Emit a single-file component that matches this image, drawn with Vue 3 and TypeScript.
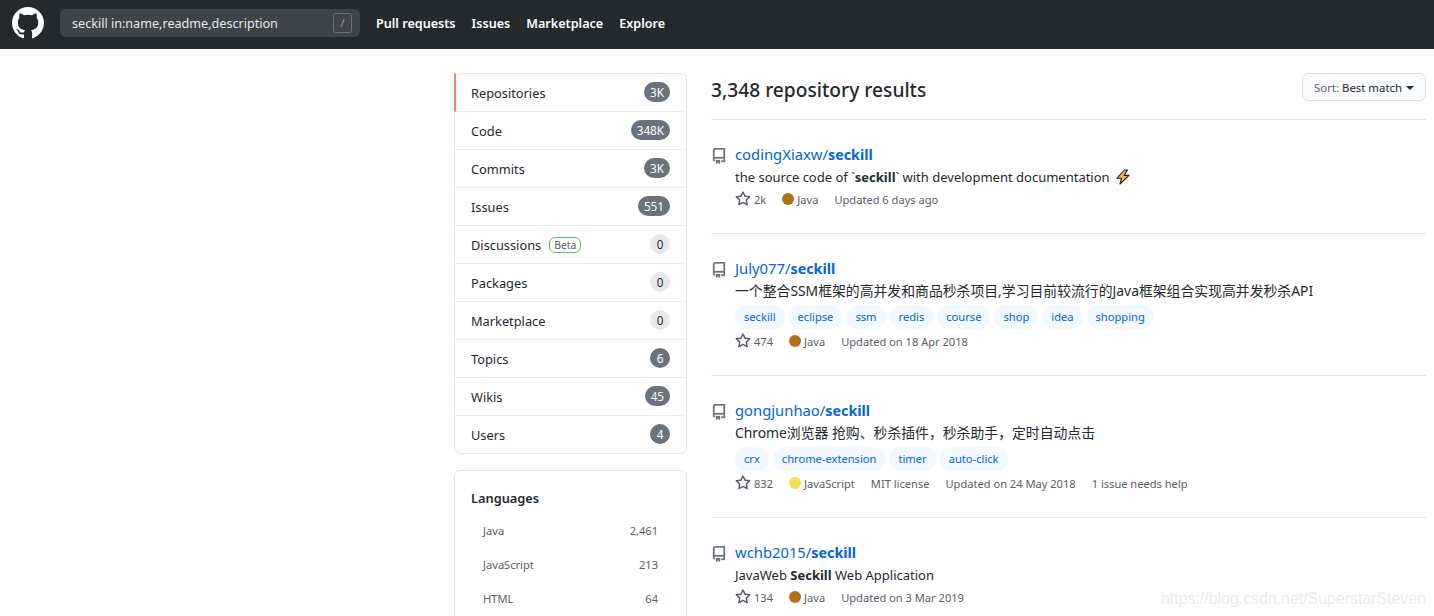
<script setup lang="ts">
interface Row { label: string; count: string; dark: boolean; beta?: boolean }
interface Repo { owner: string; desc: string; tags: string[]; stars: string; lang: string; color: string; meta: string[]; bolt?: boolean; bold?: [string, string, string] }

const rows: Row[] = [
  { label: 'Repositories', count: '3K', dark: true },
  { label: 'Code', count: '348K', dark: true },
  { label: 'Commits', count: '3K', dark: true },
  { label: 'Issues', count: '551', dark: true },
  { label: 'Discussions', count: '0', dark: false, beta: true },
  { label: 'Packages', count: '0', dark: false },
  { label: 'Marketplace', count: '0', dark: false },
  { label: 'Topics', count: '6', dark: true },
  { label: 'Wikis', count: '45', dark: true },
  { label: 'Users', count: '4', dark: true },
]
const langs = [
  { name: 'Java', n: '2,461' },
  { name: 'JavaScript', n: '213' },
  { name: 'HTML', n: '64' },
]
const repos: Repo[] = [
  { owner: 'codingXiaxw', desc: '', bold: ['the source code of `', 'seckill', '` with development documentation '], bolt: true, tags: [], stars: '2k', lang: 'Java', color: '#b07219', meta: ['Updated 6 days ago'] },
  { owner: 'July077', desc: '一个整合SSM框架的高并发和商品秒杀项目,学习目前较流行的Java框架组合实现高并发秒杀API', tags: ['seckill', 'eclipse', 'ssm', 'redis', 'course', 'shop', 'idea', 'shopping'], stars: '474', lang: 'Java', color: '#b07219', meta: ['Updated on 18 Apr 2018'] },
  { owner: 'gongjunhao', desc: 'Chrome浏览器 抢购、秒杀插件，秒杀助手，定时自动点击', tags: ['crx', 'chrome-extension', 'timer', 'auto-click'], stars: '832', lang: 'JavaScript', color: '#f1e05a', meta: ['MIT license', 'Updated on 24 May 2018', '1 issue needs help'] },
  { owner: 'wchb2015', desc: '', bold: ['JavaWeb ', 'Seckill', ' Web Application'], tags: [], stars: '134', lang: 'Java', color: '#b07219', meta: ['Updated on 3 Mar 2019'] },
]
const navLinks = ['Pull requests', 'Issues', 'Marketplace', 'Explore']
</script>

<template>
  <div class="page">
    <header class="top">
      <svg class="mark" viewBox="0 0 16 16" width="32" height="32" aria-hidden="true"><path fill="#fff" d="M8 0C3.58 0 0 3.58 0 8c0 3.54 2.29 6.53 5.47 7.59.4.07.55-.17.55-.38 0-.19-.01-.82-.01-1.49-2.01.37-2.53-.49-2.69-.94-.09-.23-.48-.94-.82-1.13-.28-.15-.68-.52-.01-.53.63-.01 1.08.58 1.23.82.72 1.21 1.87.87 2.33.66.07-.52.28-.87.51-1.07-1.78-.2-3.64-.89-3.64-3.95 0-.87.31-1.59.82-2.15-.08-.2-.36-1.02.08-2.12 0 0 .67-.21 2.2.82.64-.18 1.32-.27 2-.27.68 0 1.36.09 2 .27 1.53-1.04 2.2-.82 2.2-.82.44 1.1.16 1.92.08 2.12.51.56.82 1.27.82 2.15 0 3.07-1.87 3.75-3.65 3.95.29.25.54.73.54 1.48 0 1.07-.01 1.93-.01 2.2 0 .21.15.46.55.38A8.013 8.013 0 0016 8c0-4.42-3.58-8-8-8z"/></svg>
      <div class="search">
        <span class="query">seckill in:name,readme,description</span>
        <span class="slash">/</span>
      </div>
      <nav class="nav"><a v-for="l in navLinks" :key="l">{{ l }}</a></nav>
    </header>

    <div class="body">
      <aside class="side">
        <div class="box">
          <div v-for="(r, i) in rows" :key="r.label" class="row" :class="{ active: i === 0 }">
            <span class="row-label">{{ r.label }}</span>
            <span v-if="r.beta" class="beta">Beta</span>
            <span class="count" :class="{ dark: r.dark }">{{ r.count }}</span>
          </div>
        </div>
        <div class="box lang-box">
          <h3>Languages</h3>
          <div v-for="l in langs" :key="l.name" class="lang-row"><span>{{ l.name }}</span><span>{{ l.n }}</span></div>
        </div>
      </aside>

      <main class="main">
        <div class="head">
          <h2>3,348 repository results</h2>
          <button class="sort"><span class="sort-k">Sort:</span> Best match<i class="caret"></i></button>
        </div>
        <article v-for="r in repos" :key="r.owner" class="repo" :class="{ tagged: r.tags.length }">
          <svg class="repo-icon" viewBox="0 0 16 16" width="16" height="16" aria-hidden="true"><path fill="#6a737d" stroke="#6a737d" stroke-width=".3" fill-rule="evenodd" d="M2 2.5A2.5 2.5 0 014.5 0h8.75a.75.75 0 01.75.75v12.5a.75.75 0 01-.75.75h-2.5a.75.75 0 110-1.5h1.75v-2h-8a1 1 0 00-.714 1.7.75.75 0 01-1.072 1.05A2.495 2.495 0 012 11.5v-9zm10.5-1V9h-8c-.356 0-.694.074-1 .208V2.5a1 1 0 011-1h8zM5 12.25v3.25a.25.25 0 00.4.2l1.45-1.087a.25.25 0 01.3 0L8.6 15.7a.25.25 0 00.4-.2v-3.25a.25.25 0 00-.25-.25h-3.5a.25.25 0 00-.25.25z"/></svg>
          <div class="repo-body">
            <div class="repo-title">{{ r.owner }}/<b>seckill</b></div>
            <p class="desc" :class="{ cjk: !r.bold }">
              <template v-if="r.bold">{{ r.bold[0] }}<b>{{ r.bold[1] }}</b>{{ r.bold[2] }}</template>
              <template v-else>{{ r.desc }}</template>
              <svg v-if="r.bolt" class="bolt" viewBox="0 0 16 16" width="16" height="16" aria-hidden="true"><path fill="#fdbb3c" stroke="#1b1f23" stroke-width="1.1" stroke-linejoin="round" d="M9.5 1 2 9.2h4.6L5 15l9-8.6H9.2L12.5 1z"/></svg>
            </p>
            <div v-if="r.tags.length" class="tags"><span v-for="t in r.tags" :key="t" class="tag">{{ t }}</span></div>
            <div class="meta">
              <span class="stars">
                <svg viewBox="0 0 16 16" width="16" height="16" aria-hidden="true"><path fill="#586069" fill-rule="evenodd" d="M8 .25a.75.75 0 01.673.418l1.882 3.815 4.21.612a.75.75 0 01.416 1.279l-3.046 2.97.719 4.192a.75.75 0 01-1.088.791L8 12.347l-3.766 1.98a.75.75 0 01-1.088-.79l.72-4.194L.818 6.374a.75.75 0 01.416-1.28l4.21-.611L7.327.668A.75.75 0 018 .25zm0 2.445L6.615 5.5a.75.75 0 01-.564.41l-3.097.45 2.24 2.184a.75.75 0 01.216.664l-.528 3.084 2.769-1.456a.75.75 0 01.698 0l2.77 1.456-.53-3.084a.75.75 0 01.216-.664l2.24-2.183-3.096-.45a.75.75 0 01-.564-.41L8 2.694v.001z"/></svg>
                {{ r.stars }}
              </span>
              <span class="lang"><i class="dot" :style="{ background: r.color }"></i>{{ r.lang }}</span>
              <span v-for="m in r.meta" :key="m">{{ m }}</span>
            </div>
          </div>
        </article>
      </main>
    </div>
    <div class="mark-wm">https://blog.csdn.net/SuperstarSteven</div>
  </div>
</template>

<style>
html, body { margin: 0; overflow: hidden; background: #fff; }
</style>

<style scoped>
.page { position: relative; width: 1434px; height: 616px; overflow: hidden; font-family: "Noto Sans", "Noto Sans CJK SC", sans-serif; font-size: 12.8px; color: #24292e; }
.top { height: 49px; background: #24292e; display: flex; align-items: center; padding-left: 12px; box-sizing: border-box; }
.mark { flex: none; margin-top: -3px; }
.search { width: 300px; height: 28px; margin-left: 16px; margin-top: -3px; border-radius: 6px; background: #3f4448; display: flex; align-items: center; justify-content: space-between; padding: 0 8px 0 12px; box-sizing: border-box; color: #e6e8e9; font-size: 12.6px; }
.slash { width: 19px; height: 20px; border: 1px solid #6b7074; border-radius: 3px; box-sizing: border-box; text-align: center; line-height: 18px; font-size: 11px; color: #9a9ea1; }
.nav { display: flex; gap: 16px; margin-left: 16px; margin-top: -3px; color: #fff; font-weight: 600; font-size: 12.6px; }
.body { display: flex; padding: 24px 8px 0 454px; }
.side { width: 233px; flex: none; }
.box { border: 1px solid #e1e4e8; border-radius: 6px; box-sizing: border-box; }
.row { height: 38px; display: flex; align-items: center; padding: 0 16px; border-bottom: 1px solid #eaecef; box-sizing: border-box; position: relative; }
.row:last-child { border-bottom: 0; height: 37px; }
.row.active::before { content: ""; position: absolute; left: -1px; top: -1px; bottom: -1px; width: 2px; background: #f9826c; border-radius: 6px 0 0 6px; }
.beta { margin-left: 8px; height: 16px; line-height: 14px; padding: 0 4px; border: 1px solid #4cc766; border-radius: 6px; font-size: 10.4px; color: #586069; box-sizing: border-box; }
.count { margin-left: auto; margin-top: -1px; min-width: 20px; height: 20px; padding: 0 6px; border-radius: 10px; background: #e6e8eb; color: #24292e; font-size: 11.7px; line-height: 20px; text-align: center; box-sizing: border-box; }
.count.dark { background: #6a737d; color: #fff; }
.lang-box { margin-top: 16px; padding: 16px 16px 0; height: 160px; }
.lang-box h3 { margin: 0 0 5px; font-size: 12.8px; font-weight: 600; line-height: 22px; }
.lang-row { display: flex; justify-content: space-between; height: 34px; line-height: 34px; padding: 0 12px; font-size: 11.1px; color: #586069; box-sizing: border-box; }
.main { margin-left: 24px; width: 715px; }
.head { height: 47px; display: flex; align-items: flex-start; justify-content: space-between; border-bottom: 1px solid #e1e4e8; box-sizing: border-box; }
.head h2 { margin: 3px 0 0; font-size: 19.2px; font-weight: 500; line-height: 28px; }
.sort { height: 28px; width: 124px; padding: 0; border: 1px solid #dcdee1; border-radius: 6px; background: #fafbfc; font: inherit; font-size: 11.4px; color: #24292e; }
.sort-k { color: #586069; }
.caret { display: inline-block; margin-left: 4px; vertical-align: 2px; border: 4px solid transparent; border-top-color: #24292e; border-bottom: 0; }
.repo { display: flex; align-items: flex-start; border-bottom: 1px solid #e1e4e8; box-sizing: border-box; height: 114px; padding-top: 24px; }
.repo.tagged { height: 142px; }
.repo-icon { flex: none; margin-top: 4px; }
.repo-body { margin-left: 8px; }
.repo-title { font-size: 14.8px; line-height: 20px; color: #0366d6; height: 20px; }
.repo-title b { font-weight: 700; font-size: 14.3px; }
.desc { margin: 2px 0 0; line-height: 22px; height: 22px; display: flex; align-items: center; white-space: pre; font-size: 13px; }
.desc.cjk { font-size: 13.85px; }
.desc b { font-weight: 700; }
.bolt { margin-left: 2px; }
.tags { display: flex; gap: 4px; margin: 3px 0 2px; height: 24px; }
.tag { height: 24px; line-height: 24px; padding: 0 9px; border-radius: 12px; background: #f1f8ff; color: #0366d6; font-size: 11.15px; box-sizing: border-box; }
.meta { display: flex; align-items: center; gap: 16px; height: 20px; margin-top: 1px; font-size: 11.1px; color: #586069; }
.stars { display: flex; align-items: center; gap: 3px; }
.lang { display: flex; align-items: center; gap: 1px; }
.dot { width: 12px; height: 12px; border-radius: 50%; margin-right: 2px; }
.mark-wm { position: absolute; right: 8px; bottom: 8px; font-family: "Liberation Sans", sans-serif; font-size: 15.9px; color: #ececec; }
</style>
